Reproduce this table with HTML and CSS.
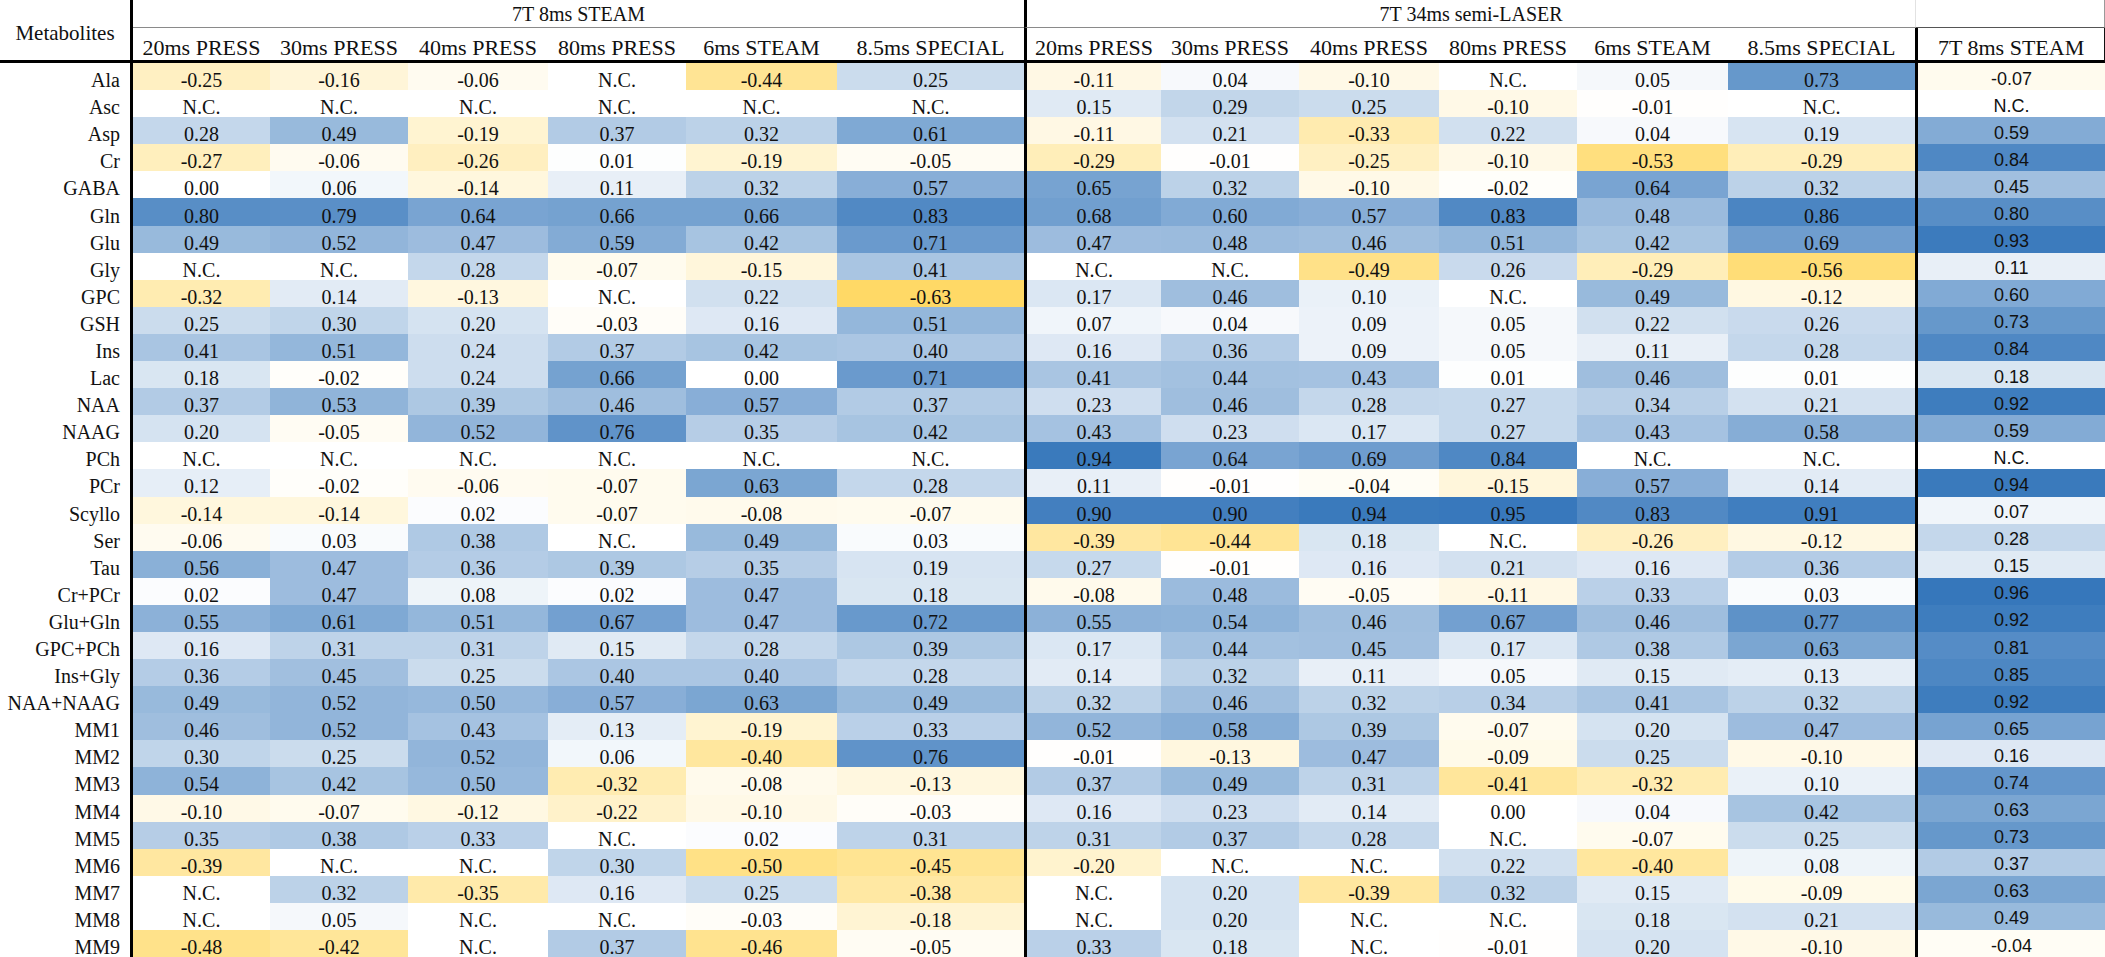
FILE: index.html
```html
<!DOCTYPE html>
<html>
<head>
<meta charset="utf-8">
<title>Metabolite correlations</title>
<link rel="stylesheet" href="styles.css">
</head>
<body>
<table class="corr">
<colgroup>
<col class="c-label">
<col class="c1"><col class="c2"><col class="c3"><col class="c4"><col class="c5"><col class="c6">
<col class="c1"><col class="c2"><col class="c3"><col class="c4"><col class="c5"><col class="c6">
<col class="c-last">
</colgroup>
<thead>
<tr class="top">
<th rowspan="2" class="met">Metabolites</th>
<th colspan="6" class="grp">7T 8ms STEAM</th>
<th colspan="6" class="grp grp2">7T 34ms semi-LASER</th>
<th class="blank"></th>
</tr>
<tr class="sub">
<th>20ms PRESS</th><th>30ms PRESS</th><th>40ms PRESS</th><th>80ms PRESS</th><th>6ms STEAM</th><th>8.5ms SPECIAL</th>
<th>20ms PRESS</th><th>30ms PRESS</th><th>40ms PRESS</th><th>80ms PRESS</th><th>6ms STEAM</th><th>8.5ms SPECIAL</th>
<th class="lasthead">7T 8ms STEAM</th>
</tr>
</thead>
<tbody>
<tr><th>Ala</th><td>-0.25</td><td>-0.16</td><td>-0.06</td><td>N.C.</td><td>-0.44</td><td>0.25</td><td>-0.11</td><td>0.04</td><td>-0.10</td><td>N.C.</td><td>0.05</td><td>0.73</td><td>-0.07</td></tr>
<tr><th>Asc</th><td>N.C.</td><td>N.C.</td><td>N.C.</td><td>N.C.</td><td>N.C.</td><td>N.C.</td><td>0.15</td><td>0.29</td><td>0.25</td><td>-0.10</td><td>-0.01</td><td>N.C.</td><td>N.C.</td></tr>
<tr><th>Asp</th><td>0.28</td><td>0.49</td><td>-0.19</td><td>0.37</td><td>0.32</td><td>0.61</td><td>-0.11</td><td>0.21</td><td>-0.33</td><td>0.22</td><td>0.04</td><td>0.19</td><td>0.59</td></tr>
<tr><th>Cr</th><td>-0.27</td><td>-0.06</td><td>-0.26</td><td>0.01</td><td>-0.19</td><td>-0.05</td><td>-0.29</td><td>-0.01</td><td>-0.25</td><td>-0.10</td><td>-0.53</td><td>-0.29</td><td>0.84</td></tr>
<tr><th>GABA</th><td>0.00</td><td>0.06</td><td>-0.14</td><td>0.11</td><td>0.32</td><td>0.57</td><td>0.65</td><td>0.32</td><td>-0.10</td><td>-0.02</td><td>0.64</td><td>0.32</td><td>0.45</td></tr>
<tr><th>Gln</th><td>0.80</td><td>0.79</td><td>0.64</td><td>0.66</td><td>0.66</td><td>0.83</td><td>0.68</td><td>0.60</td><td>0.57</td><td>0.83</td><td>0.48</td><td>0.86</td><td>0.80</td></tr>
<tr><th>Glu</th><td>0.49</td><td>0.52</td><td>0.47</td><td>0.59</td><td>0.42</td><td>0.71</td><td>0.47</td><td>0.48</td><td>0.46</td><td>0.51</td><td>0.42</td><td>0.69</td><td>0.93</td></tr>
<tr><th>Gly</th><td>N.C.</td><td>N.C.</td><td>0.28</td><td>-0.07</td><td>-0.15</td><td>0.41</td><td>N.C.</td><td>N.C.</td><td>-0.49</td><td>0.26</td><td>-0.29</td><td>-0.56</td><td>0.11</td></tr>
<tr><th>GPC</th><td>-0.32</td><td>0.14</td><td>-0.13</td><td>N.C.</td><td>0.22</td><td>-0.63</td><td>0.17</td><td>0.46</td><td>0.10</td><td>N.C.</td><td>0.49</td><td>-0.12</td><td>0.60</td></tr>
<tr><th>GSH</th><td>0.25</td><td>0.30</td><td>0.20</td><td>-0.03</td><td>0.16</td><td>0.51</td><td>0.07</td><td>0.04</td><td>0.09</td><td>0.05</td><td>0.22</td><td>0.26</td><td>0.73</td></tr>
<tr><th>Ins</th><td>0.41</td><td>0.51</td><td>0.24</td><td>0.37</td><td>0.42</td><td>0.40</td><td>0.16</td><td>0.36</td><td>0.09</td><td>0.05</td><td>0.11</td><td>0.28</td><td>0.84</td></tr>
<tr><th>Lac</th><td>0.18</td><td>-0.02</td><td>0.24</td><td>0.66</td><td>0.00</td><td>0.71</td><td>0.41</td><td>0.44</td><td>0.43</td><td>0.01</td><td>0.46</td><td>0.01</td><td>0.18</td></tr>
<tr><th>NAA</th><td>0.37</td><td>0.53</td><td>0.39</td><td>0.46</td><td>0.57</td><td>0.37</td><td>0.23</td><td>0.46</td><td>0.28</td><td>0.27</td><td>0.34</td><td>0.21</td><td>0.92</td></tr>
<tr><th>NAAG</th><td>0.20</td><td>-0.05</td><td>0.52</td><td>0.76</td><td>0.35</td><td>0.42</td><td>0.43</td><td>0.23</td><td>0.17</td><td>0.27</td><td>0.43</td><td>0.58</td><td>0.59</td></tr>
<tr><th>PCh</th><td>N.C.</td><td>N.C.</td><td>N.C.</td><td>N.C.</td><td>N.C.</td><td>N.C.</td><td>0.94</td><td>0.64</td><td>0.69</td><td>0.84</td><td>N.C.</td><td>N.C.</td><td>N.C.</td></tr>
<tr><th>PCr</th><td>0.12</td><td>-0.02</td><td>-0.06</td><td>-0.07</td><td>0.63</td><td>0.28</td><td>0.11</td><td>-0.01</td><td>-0.04</td><td>-0.15</td><td>0.57</td><td>0.14</td><td>0.94</td></tr>
<tr><th>Scyllo</th><td>-0.14</td><td>-0.14</td><td>0.02</td><td>-0.07</td><td>-0.08</td><td>-0.07</td><td>0.90</td><td>0.90</td><td>0.94</td><td>0.95</td><td>0.83</td><td>0.91</td><td>0.07</td></tr>
<tr><th>Ser</th><td>-0.06</td><td>0.03</td><td>0.38</td><td>N.C.</td><td>0.49</td><td>0.03</td><td>-0.39</td><td>-0.44</td><td>0.18</td><td>N.C.</td><td>-0.26</td><td>-0.12</td><td>0.28</td></tr>
<tr><th>Tau</th><td>0.56</td><td>0.47</td><td>0.36</td><td>0.39</td><td>0.35</td><td>0.19</td><td>0.27</td><td>-0.01</td><td>0.16</td><td>0.21</td><td>0.16</td><td>0.36</td><td>0.15</td></tr>
<tr><th>Cr+PCr</th><td>0.02</td><td>0.47</td><td>0.08</td><td>0.02</td><td>0.47</td><td>0.18</td><td>-0.08</td><td>0.48</td><td>-0.05</td><td>-0.11</td><td>0.33</td><td>0.03</td><td>0.96</td></tr>
<tr><th>Glu+Gln</th><td>0.55</td><td>0.61</td><td>0.51</td><td>0.67</td><td>0.47</td><td>0.72</td><td>0.55</td><td>0.54</td><td>0.46</td><td>0.67</td><td>0.46</td><td>0.77</td><td>0.92</td></tr>
<tr><th>GPC+PCh</th><td>0.16</td><td>0.31</td><td>0.31</td><td>0.15</td><td>0.28</td><td>0.39</td><td>0.17</td><td>0.44</td><td>0.45</td><td>0.17</td><td>0.38</td><td>0.63</td><td>0.81</td></tr>
<tr><th>Ins+Gly</th><td>0.36</td><td>0.45</td><td>0.25</td><td>0.40</td><td>0.40</td><td>0.28</td><td>0.14</td><td>0.32</td><td>0.11</td><td>0.05</td><td>0.15</td><td>0.13</td><td>0.85</td></tr>
<tr><th>NAA+NAAG</th><td>0.49</td><td>0.52</td><td>0.50</td><td>0.57</td><td>0.63</td><td>0.49</td><td>0.32</td><td>0.46</td><td>0.32</td><td>0.34</td><td>0.41</td><td>0.32</td><td>0.92</td></tr>
<tr><th>MM1</th><td>0.46</td><td>0.52</td><td>0.43</td><td>0.13</td><td>-0.19</td><td>0.33</td><td>0.52</td><td>0.58</td><td>0.39</td><td>-0.07</td><td>0.20</td><td>0.47</td><td>0.65</td></tr>
<tr><th>MM2</th><td>0.30</td><td>0.25</td><td>0.52</td><td>0.06</td><td>-0.40</td><td>0.76</td><td>-0.01</td><td>-0.13</td><td>0.47</td><td>-0.09</td><td>0.25</td><td>-0.10</td><td>0.16</td></tr>
<tr><th>MM3</th><td>0.54</td><td>0.42</td><td>0.50</td><td>-0.32</td><td>-0.08</td><td>-0.13</td><td>0.37</td><td>0.49</td><td>0.31</td><td>-0.41</td><td>-0.32</td><td>0.10</td><td>0.74</td></tr>
<tr><th>MM4</th><td>-0.10</td><td>-0.07</td><td>-0.12</td><td>-0.22</td><td>-0.10</td><td>-0.03</td><td>0.16</td><td>0.23</td><td>0.14</td><td>0.00</td><td>0.04</td><td>0.42</td><td>0.63</td></tr>
<tr><th>MM5</th><td>0.35</td><td>0.38</td><td>0.33</td><td>N.C.</td><td>0.02</td><td>0.31</td><td>0.31</td><td>0.37</td><td>0.28</td><td>N.C.</td><td>-0.07</td><td>0.25</td><td>0.73</td></tr>
<tr><th>MM6</th><td>-0.39</td><td>N.C.</td><td>N.C.</td><td>0.30</td><td>-0.50</td><td>-0.45</td><td>-0.20</td><td>N.C.</td><td>N.C.</td><td>0.22</td><td>-0.40</td><td>0.08</td><td>0.37</td></tr>
<tr><th>MM7</th><td>N.C.</td><td>0.32</td><td>-0.35</td><td>0.16</td><td>0.25</td><td>-0.38</td><td>N.C.</td><td>0.20</td><td>-0.39</td><td>0.32</td><td>0.15</td><td>-0.09</td><td>0.63</td></tr>
<tr><th>MM8</th><td>N.C.</td><td>0.05</td><td>N.C.</td><td>N.C.</td><td>-0.03</td><td>-0.18</td><td>N.C.</td><td>0.20</td><td>N.C.</td><td>N.C.</td><td>0.18</td><td>0.21</td><td>0.49</td></tr>
<tr><th>MM9</th><td>-0.48</td><td>-0.42</td><td>N.C.</td><td>0.37</td><td>-0.46</td><td>-0.05</td><td>0.33</td><td>0.18</td><td>N.C.</td><td>-0.01</td><td>0.20</td><td>-0.10</td><td>-0.04</td></tr>
</tbody>
</table>
<script src="script.js"></script>
</body>
</html>
```

FILE: styles.css
```css
html, body {
  margin: 0;
  padding: 0;
  background: #fff;
}

body {
  font-family: "Liberation Serif", "Times New Roman", serif;
  font-size: 20px;
  color: #111;
}

.corr {
  width: 2105px;
  table-layout: fixed;
  border-collapse: separate;
  border-spacing: 0;
}

.corr .c-label { width: 133px; }
.corr .c1 { width: 137px; }
.corr .c2 { width: 138px; }
.corr .c3 { width: 140px; }
.corr .c4 { width: 138px; }
.corr .c5 { width: 151px; }
.corr .c6 { width: 187px; }
.corr .c-last { width: 190px; }

.corr th,
.corr td {
  padding: 0;
  font-weight: normal;
  line-height: 20px;
  white-space: nowrap;
  text-align: center;
}

/* header row 1 */
.corr .top th {
  height: 28px;
  vertical-align: bottom;
  padding-bottom: 3px;
  box-sizing: border-box;
}

.corr .top .grp {
  border-bottom: 1px solid #8a8a8a;
}

.corr .top .grp2 {
  border-left: 3px solid #000;
}

.corr .top .blank {
  border-bottom: 1px solid #555;
  border-left: 1px solid #e2e2e2;
  border-right: 1px solid #9a9a9a;
}

.corr .met {
  border-right: 3px solid #000;
  border-bottom: 3px solid #000;
  padding-top: 5px;
  font-size: 21px;
}

.corr .top th.met {
  vertical-align: middle;
  padding-bottom: 0;
}

/* header row 2 */
.corr .sub th {
  height: 31px;
  font-size: 22px;
  line-height: 22px;
  vertical-align: bottom;
  padding-bottom: 1px;
  border-bottom: 3px solid #000;
}

.corr .sub th:nth-child(7) {
  border-left: 3px solid #000;
}

.corr .sub .lasthead {
  border-left: 3px solid #000;
  border-right: 1px solid #111;
}

/* body rows */
.corr tbody tr {
  height: 27.1px;
}

.corr tbody th {
  text-align: right;
  padding: 7px 10px 0 0;
  border-right: 3px solid #000;
  vertical-align: middle;
}

.corr tbody td {
  vertical-align: middle;
  padding-top: 7px;
}

.corr tbody td:nth-child(8) {
  border-left: 3px solid #000;
}

.corr tbody td:nth-child(14) {
  border-left: 3px solid #000;
  font-family: "Liberation Sans", Arial, sans-serif;
  font-size: 18px;
  line-height: 18px;
  padding-top: 4px;
}
```

FILE: script.js
```js
(function () {
  var YELLOW = [255, 217, 102];
  var BLUE = [54, 119, 187];
  var MIN = -0.63;
  var MAX = 0.96;
  function mix(c, t) {
    return 'rgb(' + c.map(function (v) {
      return Math.round(255 + (v - 255) * t);
    }).join(',') + ')';
  }
  var rows = document.querySelectorAll('.corr tbody tr');
  rows.forEach(function (tr) {
    var cells = tr.querySelectorAll('td');
    cells.forEach(function (td) {
      var v = parseFloat(td.textContent);
      if (isNaN(v)) return;
      var t, c;
      if (v < 0) {
        t = Math.min(1, v / MIN);
        c = YELLOW;
      } else {
        t = Math.min(1, v / MAX);
        c = BLUE;
      }
      td.style.backgroundColor = mix(c, t);
    });
  });
})();
```
